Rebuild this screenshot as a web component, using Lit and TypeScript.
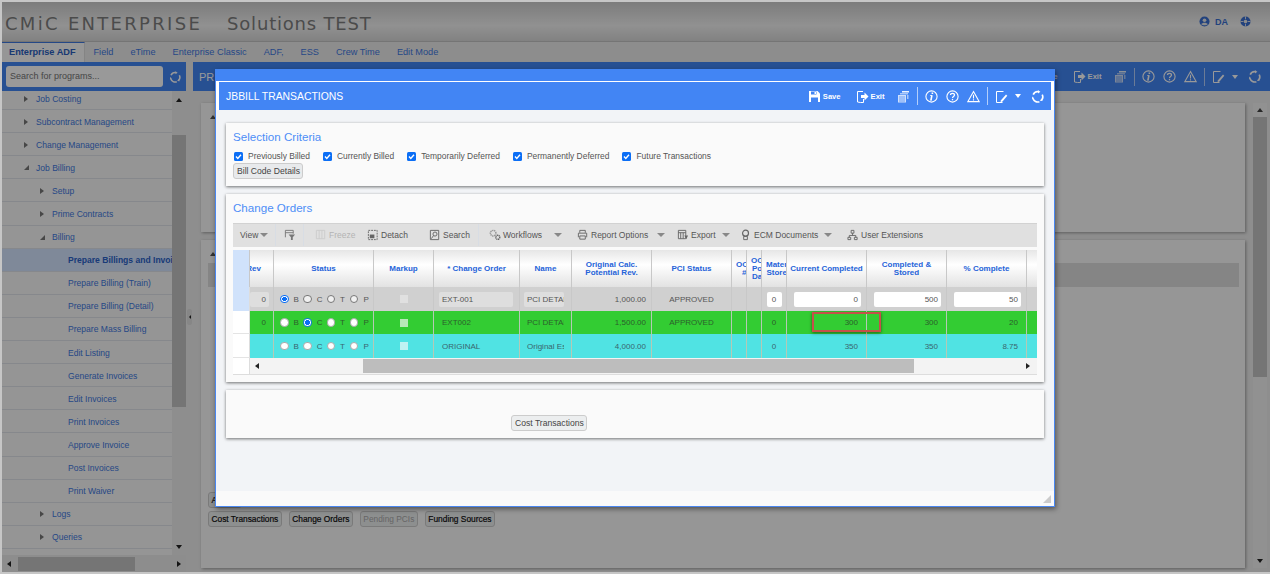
import { LitElement, html, css, svg } from 'lit';
import { customElement } from 'lit/decorators.js';

const icons: Record<string, any> = {
  save: svg`<path fill="currentColor" d="M1 1h8.5L12 3.5V12H1z"/><path fill="#4285f4" d="M3 1.5h5.5v3H3zM3 7.5h7V12H3z"/><path fill="currentColor" d="M6.5 2h1.5v2H6.5z"/>`,
  exit: svg`<path fill="none" stroke="currentColor" d="M7 1.5H1.5v10.5l3 0.5H7.5V9"/><path fill="currentColor" d="M5 5h3.5V2.5L12.5 6.5l-4 4V8H5z"/>`,
  stack: svg`<path fill="currentColor" opacity=".75" d="M1 5h8v7.5H1z"/><path fill="currentColor" opacity=".55" d="M3 3h8v1.5H3zM10 5h1.5v4H10z"/><path fill="currentColor" opacity=".9" d="M5 1h7v1.5H5z"/><path stroke="#4285f4" stroke-width=".7" d="M2 7h6M2 9h6M2 11h6"/>`,
  info: svg`<circle cx="6.5" cy="6.5" r="5.6" fill="none" stroke="currentColor" stroke-width="1.1"/><path fill="none" stroke="currentColor" stroke-width="1.6" d="M7.4 2.6v1.5M6.9 5.4L6 10"/><path fill="none" stroke="currentColor" stroke-width=".9" d="M5.2 5.5h2M4.9 10.1h2"/>`,
  help: svg`<circle cx="6.5" cy="6.5" r="5.6" fill="none" stroke="currentColor" stroke-width="1.1"/><path fill="none" stroke="currentColor" stroke-width="1.3" d="M4.5 5.1c0-2.4 4-2.4 4 0 0 1.4-2 1.4-2 3"/><path stroke="currentColor" stroke-width="1.3" d="M6.5 8.9v1.4"/>`,
  warn: svg`<path fill="none" stroke="currentColor" stroke-width="1.1" d="M6.5 1.6l5.6 10H.9z"/><path stroke="currentColor" stroke-width="1.1" d="M6.5 4.8v3.8M6.5 9.2v1.2"/>`,
  note: svg`<path fill="none" stroke="currentColor" d="M8.5 1.5h-7v11h6"/><path fill="currentColor" d="M11 4.5l1.3 1.2L7.5 11.5l-2 .8.5-2z"/>`,
  refresh: svg`<path fill="none" stroke="currentColor" stroke-width="1.7" d="M2.2 4.6A5 5 0 0 1 7.6 1.7M11.2 4.6A5 5 0 0 1 10.8 9.8M8.4 11.7A5 5 0 0 1 2 8.6"/><path fill="currentColor" d="M7 .2l2.4 1.6L7 3.4zM11.7 11l-2.8-.3 1.6-2.3zM1 9.2l.2-2.6 2 1.6z"/>`,
  view: svg`<path fill="none" stroke="#777" d="M1.5 9V1.5h8.5V5"/><path fill="none" stroke="#777" d="M1.5 4h8.5"/><path fill="#777" d="M5 6h7L9.5 9v3h-2V9z"/>`,
  freeze: svg`<path fill="none" stroke="#ccc" d="M1.5 1.5h9v9h-9zM4.5 1.5v9M7.5 1.5v9"/>`,
  detach: svg`<path fill="none" stroke="#666" stroke-dasharray="2 1" d="M1.5 1.5h9.5v10h-9.5z"/><path fill="#666" d="M3 6h5v4H3z"/>`,
  search: svg`<path fill="none" stroke="#666" d="M1.5 1.5h9v10h-9z"/><circle cx="6.5" cy="5.5" r="2.2" fill="none" stroke="#666"/><path stroke="#666" d="M5 7L2.5 10.5"/>`,
  gears: svg`<circle cx="4.5" cy="4.5" r="3" fill="none" stroke="#999" stroke-width="1.6" stroke-dasharray="1.5 .6"/><circle cx="9.5" cy="9" r="2.2" fill="none" stroke="#666" stroke-width="1.5" stroke-dasharray="1.2 .5"/>`,
  printer: svg`<path fill="none" stroke="#666" d="M3 4V1.5h6V4M1.5 9V4.5h9V9M3 7.5h6v3.5H3z"/>`,
  export: svg`<path fill="none" stroke="#666" d="M1.5 1.5h8v9h-8zM1.5 4h8M4 4v6.5M6.7 4v6.5"/><path fill="#666" d="M8 7h4l-2 4z"/>`,
  ecm: svg`<circle cx="6" cy="4.5" r="3.2" fill="none" stroke="#666" stroke-width="1.3"/><path fill="none" stroke="#666" d="M4 8h4v3.5H4z"/>`,
  users: svg`<path fill="none" stroke="#666" d="M4.5 1.5h3v3h-3zM1 9h3v2.5H1zM8 9h3v2.5H8zM6 4.5V7M2.5 9V7h7v2"/>`,
};

function icon(name: string, size = 13) {
  return html`<svg class="ico" width=${size} height=${size} viewBox="0 0 13 13">${icons[name]}</svg>`;
}

// same action bar on the page and on the popup
function actions() {
  return html`
    <div class="actions">
      <span class="act">${icon('save')}<b>Save</b></span>
      <span class="act exit">${icon('exit')}<b>Exit</b></span>
      <span class="stack">${icon('stack')}</span>
      <i class="vline"></i>
      ${icon('info')}
      <span class="wide">${icon('help')}</span>
      <span class="wide">${icon('warn')}</span>
      <i class="vline"></i>
      ${icon('note')}
      <i class="caret-w"></i>
      ${icon('refresh')}
    </div>
  `;
}

const tabs = ['Field', 'eTime', 'Enterprise Classic', 'ADF,', 'ESS', 'Crew Time', 'Edit Mode'];

const tree = [
  { t: 'Job Costing', l: 0, a: 'r' },
  { t: 'Subcontract Management', l: 0, a: 'r' },
  { t: 'Change Management', l: 0, a: 'r' },
  { t: 'Job Billing', l: 0, a: 'd' },
  { t: 'Setup', l: 1, a: 'r' },
  { t: 'Prime Contracts', l: 1, a: 'r' },
  { t: 'Billing', l: 1, a: 'd' },
  { t: 'Prepare Billings and Invoices', l: 2, a: '', sel: true },
  { t: 'Prepare Billing (Train)', l: 2, a: '' },
  { t: 'Prepare Billing (Detail)', l: 2, a: '' },
  { t: 'Prepare Mass Billing', l: 2, a: '' },
  { t: 'Edit Listing', l: 2, a: '' },
  { t: 'Generate Invoices', l: 2, a: '' },
  { t: 'Edit Invoices', l: 2, a: '' },
  { t: 'Print Invoices', l: 2, a: '' },
  { t: 'Approve Invoice', l: 2, a: '' },
  { t: 'Post Invoices', l: 2, a: '' },
  { t: 'Print Waiver', l: 2, a: '' },
  { t: 'Logs', l: 1, a: 'r' },
  { t: 'Queries', l: 1, a: 'r' },
];

const checks = ['Previously Billed', 'Currently Billed', 'Temporarily Deferred', 'Permanently Deferred', 'Future Transactions'];

// w = distance to the next tool
const tools = [
  { label: 'View', w: 35, caret: 4 },
  { sep: true, w: 9 },
  { ic: 'view', w: 19 },
  { sep: true, w: 12 },
  { ic: 'freeze', label: 'Freeze', w: 52, off: true },
  { ic: 'detach', label: 'Detach', w: 62 },
  { ic: 'search', label: 'Search', w: 49 },
  { sep: true, w: 11 },
  { ic: 'gears', label: 'Workflows', w: 65 },
  { w: 23, caret: 0 },
  { ic: 'printer', label: 'Report Options', w: 80 },
  { w: 20, caret: 0 },
  { ic: 'export', label: 'Export', w: 45 },
  { w: 18, caret: 0 },
  { ic: 'ecm', label: 'ECM Documents', w: 84 },
  { w: 23, caret: 0 },
  { ic: 'users', label: 'User Extensions', w: 90 },
];

const rows = [
  { cls: 'grey', sel: 0, rev: '0', co: 'EXT-001', name: 'PCI DETAIL', calc: '1,000.00', pci: 'APPROVED', mat: '0', cur: '0', stored: '500', pct: '50', edit: true },
  { cls: 'green', sel: 1, rev: '0', co: 'EXT002', name: 'PCI DETAIL', calc: '1,500.00', pci: 'APPROVED', mat: '0', cur: '300', stored: '300', pct: '20', edit: false },
  { cls: 'cyan', sel: -1, rev: '', co: 'ORIGINAL', name: 'Original Estimate', calc: '4,000.00', pci: '', mat: '0', cur: '350', stored: '350', pct: '8.75', edit: false },
];

@customElement('app-root')
export class AppRoot extends LitElement {
  static styles = css`
:host {
  display: block;
  font-family: "Liberation Sans", Arial, sans-serif;
}

* {
  box-sizing: border-box;
}

.page {
  position: relative;
  width: 1270px;
  height: 574px;
  overflow: hidden;
  padding: 2px 0 2px 2px;
  background: #c6c6c6;
}

.shell {
  position: relative;
  height: 570px;
  display: flex;
  flex-direction: column;
  background: #ededed;
}

.glass {
  position: absolute;
  inset: 0;
  background: rgba(0, 0, 0, 0.4);
}

/* top of the page */
.brand {
  height: 40px;
  flex: none;
  display: flex;
  align-items: center;
  padding: 4px 0 0 3px;
  background: linear-gradient(#cfcfcf, #f2f2f2 60%, #d8d8d8);
  border-bottom: 1px solid #c4c4c4;
  color: #7e7e7e;
  font-family: "DejaVu Sans", sans-serif;
  font-size: 18px;
  letter-spacing: 2.3px;
  white-space: nowrap;
}

.brand .env {
  margin-left: 25px;
  letter-spacing: 0.8px;
}

.who {
  margin-left: auto;
  margin-right: 19px;
  margin-top: -4px;
  display: flex;
  align-items: center;
  color: #3a6fd0;
  font-family: "Liberation Sans", sans-serif;
  font-size: 9px;
  font-weight: bold;
  letter-spacing: 0;
}

.who span {
  margin: 0 12px 0 5px;
}

.tabs {
  height: 20px;
  flex: none;
  display: flex;
  align-items: center;
  background: #ececec;
  font-size: 9.2px;
  color: #3f78e0;
  white-space: nowrap;
}

.tabs span {
  padding: 0 8.5px;
}

.tabs .on {
  flex: none;
  height: 20px;
  line-height: 19px;
  padding: 0 0 0 7px;
  width: 83px;
  background: #fafafa;
  border-top: 1px solid #3f78e0;
  border-right: 1px solid #ddd;
  color: #2a5fc0;
  font-size: 9.2px;
  font-weight: bold;
}

.body {
  flex: 1;
  min-height: 0;
  display: grid;
  grid-template-columns: 184px 7px 1fr;
}

/* left tree */
.side {
  display: flex;
  flex-direction: column;
  min-height: 0;
}

.find {
  height: 29px;
  flex: none;
  display: flex;
  align-items: center;
  padding-left: 4px;
  background: #4285f4;
  color: #fff;
}

.find div {
  width: 157px;
  height: 21px;
  padding-left: 4px;
  line-height: 21px;
  border-radius: 3px;
  background: #fff;
  color: #757575;
  font-size: 9px;
}

.find svg {
  margin-left: 6px;
}

.treewrap {
  height: 464px;
  flex: none;
  display: flex;
  background: #f8f8f8;
}

.tree {
  width: 170px;
  overflow: hidden;
}

.row {
  height: 23.1px;
  padding-top: 1px;
  display: flex;
  align-items: center;
  white-space: nowrap;
  overflow: hidden;
  border-bottom: 1px solid #dfe3ea;
  color: #3f78e0;
  font-size: 8.55px;
}

.row:first-child {
  margin-top: -4px;
}

.row.sel {
  background: #d4e4ff;
  color: #2a62c8;
  font-weight: bold;
}

.tw {
  width: 12px;
  flex: none;
}

.lv0 { padding-left: 22px; }
.lv1 { padding-left: 38px; }
.lv2 { padding-left: 66px; }

.tri-r, .tri-d {
  display: block;
  width: 0;
  height: 0;
}

.tri-r {
  border-left: 4px solid #777;
  border-top: 3.5px solid transparent;
  border-bottom: 3.5px solid transparent;
}

.tri-d {
  border-right: 5px solid #777;
  border-top: 5px solid transparent;
}

.vbar {
  width: 14px;
  display: flex;
  flex-direction: column;
  align-items: center;
  background: #ededed;
}

.up, .down, .left, .right {
  display: block;
  width: 0;
  height: 0;
  flex: none;
}

.up {
  border: 3.5px solid transparent;
  border-top: 0;
  border-bottom: 4px solid #222;
}

.down {
  border: 3.5px solid transparent;
  border-bottom: 0;
  border-top: 4px solid #222;
}

.left {
  border: 3.5px solid transparent;
  border-left: 0;
  border-right: 4px solid #222;
}

.right {
  border: 3.5px solid transparent;
  border-right: 0;
  border-left: 4px solid #222;
}

.vbar .up {
  margin-top: 7px;
}

.vbar .thumb {
  width: 100%;
  height: 272px;
  margin-top: 33px;
}

.vbar .down {
  margin-top: auto;
  margin-bottom: 6px;
}

.thumb {
  background: #c4c4c4;
}

.hbar {
  height: 17px;
  flex: none;
  display: flex;
  align-items: center;
  background: #ececec;
  padding: 0 0 0 5px;
}

.hbar .thumb {
  width: 117px;
  height: 14px;
  margin-left: 7px;
}

.hbar .right {
  margin-left: 42px;
}

.split {
  display: flex;
  align-items: center;
  justify-content: center;
}

.split div {
  width: 5px;
  height: 16px;
  display: flex;
  align-items: center;
  justify-content: center;
  background: #e0e0e0;
  border-radius: 2px;
}

.split .left {
  border-width: 2px;
  border-left: 0;
  border-right-width: 2px;
}

/* main area behind the popup */
.main {
  min-width: 0;
  display: flex;
  flex-direction: column;
}

.bar {
  height: 29px;
  flex: none;
  display: flex;
  align-items: center;
  padding: 0 9px 0 6px;
  background: #4285f4;
  color: #fff;
  font-size: 11px;
}

.content {
  flex: 1;
  min-height: 0;
  display: flex;
  padding: 12px 0 4px 8px;
}

.panels {
  width: 1044px;
  display: flex;
  flex-direction: column;
  gap: 8px;
}

.panel {
  padding: 12px 7px 0;
  background: #fafafa;
  box-shadow: 1px 1px 3px rgba(0, 0, 0, 0.35);
}

.p1 {
  height: 129px;
}

.p2 {
  flex: 1;
  display: flex;
  flex-direction: column;
  padding-bottom: 41px;
}

.panel .up {
  margin-left: 2px;
  border-bottom-color: #555;
}

.band {
  height: 24px;
  margin: 7px -1px 0 0;
  background: #dedede;
}

.btns {
  display: flex;
  gap: 7px;
  margin-top: 3px;
}

.btns.first {
  margin-top: auto;
}

.btn {
  height: 16px;
  padding: 0 3px;
  line-height: 14px;
  border: 1px solid #ccc;
  border-radius: 3px;
  background: #eceeef;
  color: #444;
  font-size: 8.6px;
  text-align: center;
  white-space: nowrap;
}

.panel .btn {
  padding: 0 2.5px;
  font-size: 8.35px;
  color: #111;
  -webkit-text-stroke: 0.2px #111;
}

.panel .btn.off {
  color: #aaa;
  -webkit-text-stroke: 0;
}

.sbar {
  width: 14px;
  margin-left: 8px;
  display: flex;
  flex-direction: column;
  align-items: center;
  background: #f2f2f2;
}

.sbar .up {
  margin-top: 5px;
  border-bottom-color: #444;
}

.sbar .thumb {
  width: 100%;
  height: 260px;
  margin-top: 5px;
}

.sbar .down {
  margin-top: auto;
  margin-bottom: 5px;
}

/* action bar */
.actions {
  margin-left: auto;
  display: flex;
  align-items: center;
  gap: 7px;
  color: #fff;
}

.ico {
  display: block;
  flex: none;
}

.act {
  display: flex;
  align-items: center;
  gap: 2px;
  font-size: 7.6px;
}

.act.exit {
  margin-left: 8px;
}

.stack {
  margin-left: 5px;
}

.wide {
  margin-left: 1px;
}

.vline {
  width: 1px;
  height: 18px;
  background: rgba(255, 255, 255, 0.6);
}

.caret-w {
  width: 0;
  height: 0;
  margin: 0 3.5px 0 0;
  border: 3.5px solid transparent;
  border-bottom: 0;
  border-top: 4px solid #fff;
}

/* popup */
.modal {
  position: absolute;
  left: 215px;
  top: 69px;
  width: 840px;
  height: 438px;
  display: flex;
  flex-direction: column;
  border: 1px solid #4a87f0;
  border-top: 0;
  background: #fff;
  box-shadow: 1px 2px 5px rgba(0, 0, 0, 0.45);
}

.mtop {
  height: 12px;
  flex: none;
  margin: 0 -1px 1px;
  background: #4285f4;
}

.mhead {
  height: 28px;
  flex: none;
  margin: 0 3px;
  padding: 0 7px;
  display: flex;
  align-items: center;
  background: #4285f4;
  color: #fff;
  font-size: 10.4px;
}

.mbody {
  height: 381px;
  flex: none;
  display: flex;
  flex-direction: column;
  gap: 8px;
  padding: 13px 10px 0;
  background: #f2f4f7;
}

.mfoot {
  flex: 1;
  display: flex;
  justify-content: flex-end;
  align-items: flex-end;
  padding: 0 3px 3px 0;
  background: #fafafa;
}

.card {
  padding: 7px 7px 0;
  background: #fafafa;
  box-shadow: 0 1px 3px rgba(0, 0, 0, 0.55);
}

.c1 { height: 63px; }
.c2 { height: 188px; }
.c3 {
  height: 48px;
  padding: 25px 0 0 285px;
  display: flex;
  align-items: flex-start;
}

h2 {
  margin: 0;
  height: 14px;
  line-height: 14px;
  color: #4d8ef7;
  font-size: 11.6px;
  font-weight: normal;
}

.checks {
  display: flex;
  gap: 13px;
  margin: 7px 0 2px 1px;
  height: 10px;
  align-items: center;
  color: #555;
  font-size: 8.45px;
}

.check {
  display: flex;
  align-items: center;
  gap: 5px;
}

.box {
  width: 9px;
  height: 9px;
  border-radius: 1.5px;
  background: #0b6ef5;
  display: block;
}

.c1 .btn {
  display: block;
  width: 70px;
  background: #e8eaec;
}

.c3 .btn {
  width: 76px;
}

/* grid toolbar */
.tools {
  height: 24px;
  margin-top: 8px;
  padding: 0 0 2px 7px;
  display: flex;
  align-items: center;
  background: #e0e0e0;
  border-top: 1px solid #d2d2d2;
  color: #555;
  font-size: 8.5px;
}

.tool {
  flex: none;
  display: flex;
  align-items: center;
  gap: 2px;
  white-space: nowrap;
}

.tool.off {
  color: #b4b4b4;
}

.tsep {
  width: 1px;
  height: 22px;
  background: #d8dde4;
}

.dn {
  width: 0;
  height: 0;
  border: 4px solid transparent;
  border-bottom: 0;
  border-top: 4px solid #888;
}

/* grid */
.grid {
  margin-top: 3px;
  display: grid;
  grid-template-columns: 17px 24px 100px 60px 86px 52px 80px 80px 15px 15px 25px 80px 80px 80px 10px;
  grid-template-rows: 37px 24px 23px 24px 17px;
}

.th, .td {
  position: relative;
  min-width: 0;
  display: flex;
  align-items: center;
  white-space: nowrap;
  border-right: 1px solid #c8c8c8;
}

.th {
  justify-content: center;
  overflow: hidden;
  padding: 0 2px;
  background: linear-gradient(#e6e6e6, #fff 40%, #e2e2e2);
  color: #2563d9;
  font-size: 8px;
  font-weight: bold;
  line-height: 8px;
  text-align: center;
}

.th.lead-h {
  background: #d0e2fb;
}

.th.clip {
  justify-content: flex-start;
  padding: 0 0 0 4px;
}

.th.rev {
  justify-content: flex-end;
  padding-right: 12px;
}

.th.end, .td.end {
  border-right: 0;
}

.td {
  font-size: 8px;
  padding: 0 5px;
  overflow: hidden;
}

.td.num {
  justify-content: flex-end;
  padding-right: 8px;
}

.td.calc {
  padding-right: 5px;
}

.td.center {
  justify-content: center;
}

.td.hit {
  overflow: visible;
  z-index: 1;
}

.mark {
  position: absolute;
  left: 25px;
  top: 1px;
  width: 69px;
  height: 20px;
  border: 2px solid #c5504a;
  box-shadow: 0 1px 3px rgba(0, 0, 0, 0.5);
}

.grey { background: #d0d0d0; color: #555; }
.green { background: #33cc33; color: #2c5f2c; }
.cyan { background: #50e3e3; color: #3a666e; }

.green, .cyan {
  border-right-color: #b5c9b5;
}

.lead {
  background: #fff;
  border-right: 1px solid #ddd;
  border-bottom: 1px solid #e4e4e4;
}

.lead.on {
  background: #d0e2fb;
  border-bottom: 0;
}

.in {
  height: 15px;
  line-height: 15px;
  padding: 0 3px;
  flex: none;
  overflow: hidden;
  border-radius: 2px;
  background: #fff;
  color: #555;
  text-align: right;
}

.in.dim {
  background: #dedede;
  text-align: left;
}

.in.flat {
  width: 40px;
  background: none;
  color: inherit;
  text-align: left;
}

.td.rev {
  padding: 0 4px 0 1px;
  justify-content: flex-end;
}

.td.rev .in {
  width: 19px;
  text-align: right;
}

.td.rev span {
  padding-right: 3px;
}

.td.co .in {
  width: 74px;
  padding-left: 3px;
}

.td.co span {
  padding-left: 3px;
}

.td.nm {
  padding: 0 5px 0 4px;
}

.td.nm .in {
  width: 40px;
}

.td.ed {
  justify-content: flex-end;
  padding: 0 5px 0 0;
}

.td.ed .in {
  width: 67px;
}

.td.mt .in {
  width: 15px;
  padding: 0;
  text-align: center;
}

.td.mt {
  justify-content: center;
}

.radios {
  padding: 0 0 0 6px;
  display: grid;
  grid-template-columns: repeat(5, 23.3px);
}

.radio {
  display: flex;
  align-items: center;
  gap: 5px;
}

.dot {
  width: 8.5px;
  height: 8.5px;
  flex: none;
  border-radius: 50%;
  background: #fff;
  border: 1px solid #aaa;
}

.grey .dot {
  background: #f0f0f0;
  border-color: #777;
}

.dot.on {
  background: radial-gradient(#0b6ef5 45%, #fff 50%);
  border-color: #0b6ef5;
}

.tick {
  width: 8px;
  height: 8px;
  background: #e0e0e0;
}

.green .tick { background: #b8e8b8; }
.cyan .tick { background: #bef2f2; }

.hs {
  display: grid;
  grid-column: 1 / -1;
  grid-template-columns: 17px 113px 551px 1fr;
  border-bottom: 1px solid #ddd;
  background: #f3f3f3;
}

.hs > div {
  display: flex;
  align-items: center;
}

.hs .lead {
  border-bottom: 0;
}

.hs .a {
  padding-left: 5px;
}

.hs .b {
  justify-content: flex-end;
  padding-right: 7px;
}

.hs .thumb {
  height: 14px;
  margin-top: 1px;
  background: #bdbdbd;
}
  `;

  renderTool(t: any) {
    if (t.sep) {
      return html`<span class="tool" style="width:${t.w}px"><i class="tsep"></i></span>`;
    }
    return html`
      <span class="tool ${t.off ? 'off' : ''}" style="width:${t.w}px">
        ${t.ic ? icon(t.ic, 12) : ''}
        ${t.label ?? ''}
        ${t.caret !== undefined ? html`<i class="dn"></i>` : ''}
      </span>
    `;
  }

  renderRow(r: any, i: number) {
    const c = r.cls;
    return html`
      <div class="lead ${i === 0 ? 'on' : ''}"></div>
      <div class="td rev ${c}">
        ${r.edit ? html`<div class="in dim">${r.rev}</div>` : html`<span>${r.rev}</span>`}
      </div>
      <div class="td radios ${c}">
        ${['B', 'C', 'T', 'P', 'O'].map((l, n) => html`
          <span class="radio"><i class="dot ${r.sel === n ? 'on' : ''}"></i>${l}</span>
        `)}
      </div>
      <div class="td center ${c}"><i class="tick"></i></div>
      <div class="td co ${c}">
        ${r.edit ? html`<div class="in dim">${r.co}</div>` : html`<span>${r.co}</span>`}
      </div>
      <div class="td nm ${c}">
        <div class="in ${r.edit ? 'dim' : 'flat'}">${r.name}</div>
      </div>
      <div class="td num calc ${c}">${r.calc}</div>
      <div class="td center ${c}">${r.pci}</div>
      <div class="td ${c}"></div>
      <div class="td ${c}"></div>
      <div class="td mt ${c}">${r.edit ? html`<div class="in">${r.mat}</div>` : r.mat}</div>
      ${r.edit
        ? html`
          <div class="td ed ${c}"><div class="in">${r.cur}</div></div>
          <div class="td ed ${c}"><div class="in">${r.stored}</div></div>
          <div class="td ed ${c}"><div class="in">${r.pct}</div></div>
        `
        : html`
          <div class="td num ${c} ${i === 1 ? 'hit' : ''}">${r.cur}${i === 1 ? html`<i class="mark"></i>` : ''}</div>
          <div class="td num ${c}">${r.stored}</div>
          <div class="td num ${c}">${r.pct}</div>
        `}
      <div class="td end ${c}"></div>
    `;
  }

  render() {
    return html`
      <div class="page">
        <div class="shell">
          <div class="brand">
            CMiC ENTERPRISE <span class="env">Solutions TEST</span>
            <div class="who">
              <svg width="11" height="11" viewBox="0 0 12 12"><circle cx="6" cy="6" r="5.5" fill="currentColor"/><circle cx="6" cy="4.6" r="2" fill="#e8e8e8"/><path fill="#e8e8e8" d="M2.5 9c1-2.2 6-2.2 7 0-1.5 1.5-5.5 1.5-7 0z"/></svg>
              <span>DA</span>
              <svg width="11" height="11" viewBox="0 0 12 12"><circle cx="6" cy="6" r="5.5" fill="currentColor"/><circle cx="6" cy="6" r="2" fill="#e8e8e8"/><path stroke="#e8e8e8" d="M6 .5v3M6 8.5v3M.5 6h3M8.5 6h3"/></svg>
            </div>
          </div>
          <div class="tabs">
            <span class="on">Enterprise ADF</span>
            ${tabs.map((t) => html`<span>${t}</span>`)}
          </div>
          <div class="body">
            <div class="side">
              <div class="find">
                <div>Search for programs...</div>
                <svg width="12" height="12" viewBox="0 0 13 13">${icons.refresh}</svg>
              </div>
              <div class="treewrap">
                <div class="tree">
                  ${tree.map((n) => html`
                    <div class="row lv${n.l} ${n.sel ? 'sel' : ''}">
                      ${n.a ? html`<span class="tw"><i class="${n.a === 'r' ? 'tri-r' : 'tri-d'}"></i></span>` : ''}
                      ${n.t}
                    </div>
                  `)}
                </div>
                <div class="vbar"><i class="up"></i><div class="thumb"></div><i class="down"></i></div>
              </div>
              <div class="hbar"><i class="left"></i><div class="thumb"></div><i class="right"></i></div>
            </div>
            <div class="split"><div><i class="left"></i></div></div>
            <div class="main">
              <div class="bar">PR ${actions()}</div>
              <div class="content">
                <div class="panels">
                  <div class="panel p1"><i class="up"></i></div>
                  <div class="panel p2">
                    <i class="up"></i>
                    <div class="band"></div>
                    <div class="btns first"><span class="btn">Actions</span></div>
                    <div class="btns">
                      <span class="btn">Cost Transactions</span>
                      <span class="btn">Change Orders</span>
                      <span class="btn off">Pending PCIs</span>
                      <span class="btn">Funding Sources</span>
                    </div>
                  </div>
                </div>
                <div class="sbar"><i class="up"></i><div class="thumb"></div><i class="down"></i></div>
              </div>
            </div>
          </div>
          <div class="glass"></div>
        </div>

        <div class="modal">
          <div class="mtop"></div>
          <div class="mhead">JBBILL TRANSACTIONS ${actions()}</div>
          <div class="mbody">
            <div class="card c1">
              <h2>Selection Criteria</h2>
              <div class="checks">
                ${checks.map((c) => html`
                  <span class="check">
                    <svg class="box" viewBox="0 0 9 9"><path fill="none" stroke="#fff" stroke-width="1.4" d="M2 4.6l1.8 1.8L7 2.8"/></svg>
                    ${c}
                  </span>
                `)}
              </div>
              <span class="btn">Bill Code Details</span>
            </div>
            <div class="card c2">
              <h2>Change Orders</h2>
              <div class="tools">${tools.map((t) => this.renderTool(t))}</div>
              <div class="grid">
                <div class="th lead-h"></div>
                <div class="th rev">Rev</div>
                <div class="th">Status</div>
                <div class="th">Markup</div>
                <div class="th">* Change Order</div>
                <div class="th">Name</div>
                <div class="th">Original Calc.<br />Potential Rev.</div>
                <div class="th">PCI Status</div>
                <div class="th clip">OC<br />&nbsp;&nbsp;#</div>
                <div class="th clip">OC<br />Po<br />Da</div>
                <div class="th clip">Mater<br />Store</div>
                <div class="th">Current Completed</div>
                <div class="th">Completed &amp;<br />Stored</div>
                <div class="th">% Complete</div>
                <div class="th end"></div>
                ${rows.map((r, i) => this.renderRow(r, i))}
                <div class="hs">
                  <div class="lead"></div>
                  <div class="a"><i class="left"></i></div>
                  <div class="thumb"></div>
                  <div class="b"><i class="right"></i></div>
                </div>
              </div>
            </div>
            <div class="card c3"><span class="btn">Cost Transactions</span></div>
          </div>
          <div class="mfoot">
            <svg width="8" height="8" viewBox="0 0 8 8"><path fill="#ccc" d="M8 0v8H0z"/></svg>
          </div>
        </div>
      </div>
    `;
  }
}

declare global {
  interface HTMLElementTagNameMap {
    'app-root': AppRoot;
  }
}
